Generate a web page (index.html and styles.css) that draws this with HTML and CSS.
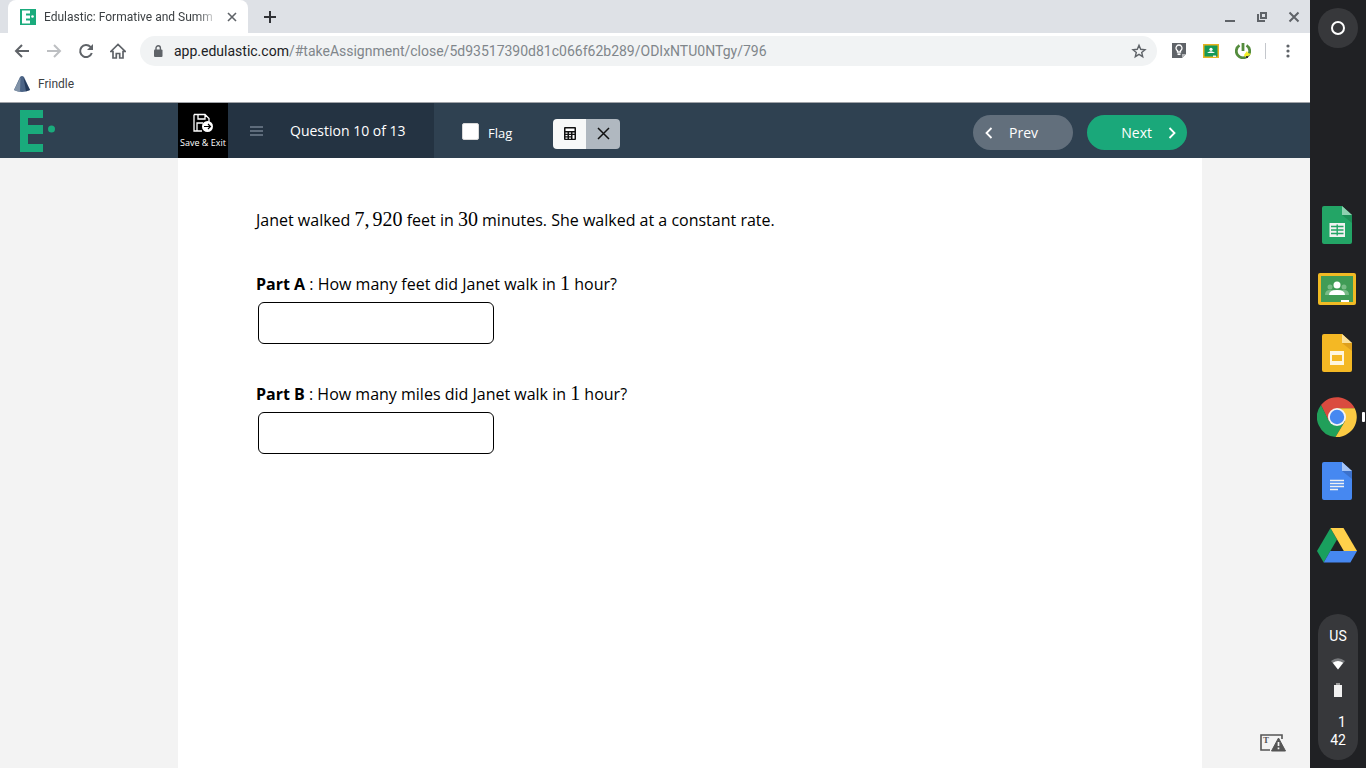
FILE: index.html
```html
<!DOCTYPE html>
<html lang="en">
<head>
<meta charset="utf-8">
<title>Edulastic: Formative and Summative Assessments</title>
<link rel="stylesheet" href="styles.css">
</head>
<body>
<div class="desktop">
  <div class="window">
    <div class="tabstrip">
      <div class="tab">
        <svg width="16" height="16" viewBox="0 0 16 16"><path fill="#1aab7c" d="M0 0h16v16H0z"/><path fill="#fff" d="M2 1.500h8v3H6v2h4v3H6v2h4v3H2z"/><circle cx="12.500" cy="7.500" r="1.300" fill="#fff"/></svg>
        <span class="tab-title">Edulastic: Formative and Summ</span>
        <button class="icon-btn" aria-label="Close tab"><svg width="10" height="10" viewBox="0 0 10 10"><path d="M1 1l8 8M9 1L1 9" stroke="#5f6368" stroke-width="1.600"/></svg></button>
      </div>
      <button class="icon-btn new-tab" aria-label="New tab"><svg width="12" height="12" viewBox="0 0 12 12"><path d="M6 0v12M0 6h12" stroke="#303236" stroke-width="2"/></svg></button>
      <div class="window-controls">
        <button class="icon-btn" aria-label="Minimize"><svg width="12" height="12" viewBox="0 0 12 12"><path d="M1 10h10" stroke="#5f6368" stroke-width="2"/></svg></button>
        <button class="icon-btn" aria-label="Restore"><svg width="12" height="12" viewBox="0 0 12 12" fill="none" stroke="#5f6368" stroke-width="2"><path d="M5 2h5v5H5z"/><path d="M2 3v7h7"/></svg></button>
        <button class="icon-btn" aria-label="Close"><svg width="12" height="12" viewBox="0 0 12 12"><path d="M1.500 1.500l9 9M10.500 1.500l-9 9" stroke="#5f6368" stroke-width="2"/></svg></button>
      </div>
    </div>
    <div class="toolbar">
      <div class="nav">
        <button class="icon-btn" aria-label="Back"><svg width="16" height="16" viewBox="0 0 16 16" fill="none" stroke="#5f6368" stroke-width="2"><path d="M15 8H2.500M8 2L2 8l6 6"/></svg></button>
        <button class="icon-btn" aria-label="Forward"><svg width="16" height="16" viewBox="0 0 16 16" fill="none" stroke="#bdbfc2" stroke-width="2"><path d="M1 8h12.500M8 2l6 6-6 6"/></svg></button>
        <button class="icon-btn" aria-label="Reload"><svg width="16" height="16" viewBox="0 0 16 16"><path d="M13.800 10a6 6 0 1 1-1.300-6.100L14 5.500" fill="none" stroke="#5f6368" stroke-width="2"/><path fill="#5f6368" d="M15 1v6H9z"/></svg></button>
        <button class="icon-btn" aria-label="Home"><svg width="16" height="16" viewBox="0 0 16 16"><path d="M.8 8.500L8 1.500l7.200 7H13V15H9.700v-4.500H6.300V15H3V8.500z" fill="none" stroke="#5f6368" stroke-width="1.700"/></svg></button>
      </div>
      <div class="address">
        <svg width="10" height="13" viewBox="0 0 10 13"><rect x="1" y="4.500" width="8.500" height="7.500" rx="1" fill="#5f6368"/><path d="M3 5V3a2.200 2.200 0 0 1 4.400 0v2" fill="none" stroke="#5f6368" stroke-width="1.400"/></svg>
        <span class="url"><span class="host">app.edulastic.com</span>/#takeAssignment/close/5d93517390d81c066f62b289/ODIxNTU0NTgy/796</span>
        <button class="icon-btn" aria-label="Bookmark"><svg width="16" height="16" viewBox="0 0 16 16"><path d="M8 2.300l1.700 4 4.300.4-3.300 2.800 1 4.200L8 11.400l-3.700 2.300 1-4.200L2 6.700l4.300-.4z" fill="none" stroke="#5f6368" stroke-width="1.400"/></svg></button>
      </div>
      <div class="extensions">
        <button class="icon-btn" aria-label="Keep"><svg width="16" height="16" viewBox="0 0 16 16"><path d="M1 0h14v11l-4 4H1z" fill="#5f6368"/><path d="M11 15v-4h4z" fill="#b5b7ba"/><path d="M6.500 9V7.600a3 3 0 1 1 3 0V9z" fill="none" stroke="#fff" stroke-width="1.300"/><path d="M6.500 11.200h3" stroke="#fff" stroke-width="1.700"/></svg></button>
        <button class="icon-btn" aria-label="Classroom"><svg width="16" height="16" viewBox="0 0 16 16"><path d="M0 1h16v14H0z" fill="#e8b321"/><path d="M1.500 2.500h13v11h-13z" fill="#159957"/><circle cx="8" cy="6.300" r="1.600" fill="#fff"/><path d="M4 10q4-3.500 8 0z" fill="#fff"/><path d="M10 12.500h3v1.500h-3z" fill="#eee"/></svg></button>
        <button class="icon-btn" aria-label="Power"><svg width="16" height="16" viewBox="0 0 16 16"><path d="M4.500 2.400a6.700 6.700 0 1 0 7 0M8 0v8" fill="none" stroke="#548c3d" stroke-width="2.800"/><path d="M9 12l3-4 1 2 3 1-3 2-3 1z" fill="#f4ef22"/><path d="M11 13h2v2h-2z" fill="#333"/></svg></button>
        <span class="separator"></span>
        <button class="icon-btn" aria-label="Menu"><svg width="16" height="16" viewBox="0 0 16 16" fill="#5f6368"><circle cx="8" cy="3" r="1.600"/><circle cx="8" cy="8" r="1.600"/><circle cx="8" cy="13" r="1.600"/></svg></button>
      </div>
    </div>
    <div class="bookmarks">
      <a class="bookmark" href="#frindle"><svg width="16" height="16" viewBox="0 0 16 16"><path d="M6 1Q8-1 10 1l6 13q-8 4-16 0z" fill="#4c6486"/><path d="M6.500 1.500L0 14q3 1.500 6 1.500z" fill="#8193a8"/><path d="M9.500 1.500L16 14l-4 1.300z" fill="#263b5b"/></svg>Frindle</a>
    </div>
    <header class="app-header">
      <div class="brand">
        <svg width="36" height="42" viewBox="0 0 36 42" role="img" aria-label="Edulastic"><path fill="#1aab7c" d="M0 0h23v8H8v7h15v9H8v10h15v8H0z"/><circle cx="31.500" cy="19" r="3.500" fill="#1aab7c"/></svg>
      </div>
      <button class="save">
        <svg width="22" height="20" viewBox="0 0 22 20"><path d="M2 1.500h11l4 4V10M10 18H2V1.500M6 1.500V6h7V1.500M5 18v-8h6" fill="none" stroke="#fff" stroke-width="1.300"/><circle cx="15.500" cy="13.500" r="5.500" fill="#fff"/><path d="M12 13.500h6M16 11l2.500 2.500L16 16" fill="none" stroke="#000" stroke-width="1.200"/></svg>
        <span>Save &amp; Exit</span>
      </button>
      <div class="question">
        <button class="icon-btn" aria-label="Question list"><svg width="13" height="10" viewBox="0 0 13 10"><path d="M0 1h13M0 5h13M0 9h13" stroke="#72808e" stroke-width="1.500"/></svg></button>
        <span>Question 10 of 13</span>
      </div>
      <label class="flag"><input type="checkbox">Flag</label>
      <div class="tools">
        <button class="tool" aria-label="Calculator"><svg width="12" height="13" viewBox="0 0 12 13"><path fill="#111" d="M1 0h10a1 1 0 0 1 1 1v11a1 1 0 0 1-1 1H1a1 1 0 0 1-1-1V1a1 1 0 0 1 1-1z"/><path fill="#fff" d="M1.500 1.500h9V4h-9zM1.500 5.500h2v1.300h-2zM5 5.500h2v1.300H5zM8.500 5.500h2v1.300h-2zM1.500 8h2v1.300h-2zM5 8h2v1.300H5zM1.500 10.500h2v1.300h-2zM5 10.500h2v1.300H5zM8.500 8h2v3.800h-2z"/></svg></button>
        <button class="tool tool-close" aria-label="Cross out"><svg width="13" height="13" viewBox="0 0 13 13"><path d="M1 1l11 11M12 1L1 12" stroke="#111" stroke-width="1.500"/></svg></button>
      </div>
      <div class="pager">
        <button class="page-btn prev"><svg width="8" height="12" viewBox="0 0 8 12"><path d="M6.500 1L1.500 6l5 5" fill="none" stroke="#fff" stroke-width="1.800"/></svg><span>Prev</span></button>
        <button class="page-btn next"><span>Next</span><svg width="8" height="12" viewBox="0 0 8 12"><path d="M1.500 1l5 5-5 5" fill="none" stroke="#fff" stroke-width="1.800"/></svg></button>
      </div>
    </header>
    <div class="stage">
      <main class="sheet">
        <p class="prompt">Janet walked <span class="math">7,<span class="digits">920</span></span> feet in <span class="math">30</span> minutes. She walked at a constant rate.</p>
        <div class="part">
          <label for="part-a"><b>Part A</b> : How many feet did Janet walk in <span class="math">1</span> hour?</label>
          <input id="part-a" class="answer" type="text">
        </div>
        <div class="part">
          <label for="part-b"><b>Part B</b> : How many miles did Janet walk in <span class="math">1</span> hour?</label>
          <input id="part-b" class="answer" type="text">
        </div>
      </main>
      <aside class="margin">
        <button class="icon-btn" aria-label="Report a problem"><svg width="26" height="18" viewBox="0 0 26 18"><path d="M22 5V1H1v15h9" fill="none" stroke="#555" stroke-width="1.600"/><text x="3" y="9" class="glyph">T</text><path d="M18.500 4L25.500 17h-14z" fill="#555" stroke="#555" stroke-linejoin="round"/><path d="M18.500 8v4M18.500 13.500v1.800" stroke="#f3f3f3" stroke-width="1.700"/></svg></button>
      </aside>
    </div>
  </div>
  <nav class="shelf">
    <button class="launcher" aria-label="Launcher"><svg width="16" height="16" viewBox="0 0 16 16"><circle cx="8" cy="8" r="6" fill="none" stroke="#fff" stroke-width="2"/></svg></button>
    <div class="apps">
      <button class="icon-btn" aria-label="Sheets"><svg width="40" height="40" viewBox="0 0 40 40"><path fill="#23a566" d="M7 1h18l10 9v27a2 2 0 0 1-2 2H7a2 2 0 0 1-2-2V3a2 2 0 0 1 2-2z"/><path fill="#8ed1b1" d="M25 1l10 9H25z"/><path d="M25 10h10v8z" fill="#1c8f57"/><path fill="#f1f1f1" d="M12.500 18H28v14H12.500z"/><path d="M14 21.500h12.500M14 25h12.500M14 28.500h12.500M20.200 19.500v11" stroke="#23a566" stroke-width="1.400"/></svg></button>
      <button class="icon-btn" aria-label="Classroom"><svg width="40" height="40" viewBox="0 0 40 40"><rect x="1" y="4" width="38" height="32" rx="2" fill="#f0ba24"/><path fill="#409c56" d="M4 7h32v26H4z"/><g fill="#79bc87"><circle cx="13" cy="18" r="2.500"/><circle cx="27" cy="18" r="2.500"/><path d="M8 26q0-5 5-5h14q5 0 5 5z"/></g><circle cx="20" cy="16" r="3.500" fill="#fff"/><path d="M12 26q0-5 8-5t8 5z" fill="#fff"/><path d="M24 31h8v2h-8z" fill="#fff"/></svg></button>
      <button class="icon-btn" aria-label="Slides"><svg width="40" height="40" viewBox="0 0 40 40"><path fill="#f4b824" d="M7 1h18l10 9v27a2 2 0 0 1-2 2H7a2 2 0 0 1-2-2V3a2 2 0 0 1 2-2z"/><path fill="#fae09a" d="M25 1l10 9H25z"/><path d="M25 10h10v8z" fill="#dfa01d"/><path fill="#fff6df" d="M13 18h14v14H13z"/><path fill="#f4b824" d="M15 22h10v6H15z"/></svg></button>
      <button class="icon-btn current" aria-label="Chrome"><svg width="40" height="40" viewBox="0 0 40 40"><path fill="#da4b3f" d="M4 8a20 20 0 0 1 33.700 3.200H20L11.500 24z"/><path fill="#21a05a" d="M4 8l8.200 16.500L20 29l7.800-4.500L18.500 40A20 20 0 0 1 4 8z"/><path fill="#fbca43" d="M20 11.200h17.700A20 20 0 0 1 18.500 40l9.300-15.500z"/><circle cx="20" cy="20" r="9" fill="#f4f4f4"/><circle cx="20" cy="20" r="7.200" fill="#4688f1"/></svg></button>
      <button class="icon-btn" aria-label="Docs"><svg width="40" height="40" viewBox="0 0 40 40"><path fill="#4688f1" d="M7 1h18l10 9v27a2 2 0 0 1-2 2H7a2 2 0 0 1-2-2V3a2 2 0 0 1 2-2z"/><path fill="#a6c5f7" d="M25 1l10 9H25z"/><path d="M25 10h10v8z" fill="#3d72cb"/><path d="M13 19.500h14M13 22.500h14M13 25.500h14M13 28.500h8" stroke="#f1f1f1" stroke-width="1.600"/></svg></button>
      <button class="icon-btn" aria-label="Drive"><svg width="40" height="40" viewBox="0 0 40 40"><path fill="#19a05e" d="M13.500 3L20 14.500 6.700 37.500 0 26z"/><path fill="#ffd04b" d="M13.500 3h13L40 26H26.800z"/><path fill="#4688f1" d="M13.300 26H40l-6.600 11.500H6.700z"/></svg></button>
    </div>
    <div class="status">
      <span>US</span>
      <svg width="16" height="14" viewBox="0 0 16 14"><path d="M1 4q7-5.500 14 0l-7 8.500z" fill="#77797c"/><path d="M2.800 5.800q5.200-3.500 10.400 0L8 12.500z" fill="#fff"/></svg>
      <svg width="10" height="14" viewBox="0 0 10 14"><path d="M3 0h4v2H3z" fill="#999"/><path d="M1 2h8v12H1z" fill="#f1f1f1"/></svg>
      <div class="clock"><span>1</span><span>42</span></div>
    </div>
  </nav>
</div>
</body>
</html>
```
FILE: styles.css
```css
* { box-sizing: border-box; }
body { margin: 0; font-family: "Open Sans", "Noto Sans", sans-serif; }
button { border: 0; padding: 0; background: none; color: inherit; font: inherit; cursor: pointer; }
svg { display: block; flex: none; }
.icon-btn { display: flex; align-items: center; justify-content: center; flex: none; }

.desktop { display: flex; min-height: 100vh; background: #202124; }
.window { flex: 1; min-width: 0; display: flex; flex-direction: column; background: #fff; }

.tabstrip { display: flex; height: 33px; padding-left: 8px; background: #dee1e6; font-family: Roboto, sans-serif; }
.tab { display: flex; align-items: center; width: 240px; padding: 0 11px 0 12px; background: #fff; border-radius: 8px 8px 0 0; }
.tab-title { flex: 1; margin: 0 9px 0 8px; white-space: nowrap; font-size: 12px; color: #3c4043; -webkit-mask-image: linear-gradient(to right, #000 88%, transparent); mask-image: linear-gradient(to right, #000 88%, transparent); }
.new-tab { margin-left: 16px; }
.window-controls { display: flex; align-items: center; gap: 20px; margin-left: auto; padding-right: 10px; }

.toolbar { display: flex; align-items: center; height: 36px; padding: 0 14px; font-family: Roboto, sans-serif; }
.nav { display: flex; gap: 16px; }
.address { flex: 1; display: flex; align-items: center; height: 30px; margin-left: 14px; padding: 0 10px 0 13px; border-radius: 15px; background: #f1f3f4; }
.url { flex: 1; margin-left: 11px; font-size: 14px; color: #80868b; white-space: nowrap; }
.host { color: #202124; }
.extensions { display: flex; align-items: center; gap: 16px; margin-left: 14px; }
.separator { width: 1px; height: 16px; margin: 0 -2px; background: #c4c7cc; }

.bookmarks { display: flex; align-items: center; height: 34px; padding: 0 14px 4px; border-bottom: 1px solid #a0a3a8; font-family: Roboto, sans-serif; }
.bookmark { display: flex; align-items: center; gap: 8px; font-size: 12px; color: #3c4043; text-decoration: none; }

.app-header { display: flex; align-items: stretch; height: 55px; background: #2f4151; color: #fff; }
.brand { display: flex; align-items: center; width: 178px; padding-left: 20px; }
.save { display: flex; flex-direction: column; align-items: center; justify-content: center; gap: 4px; width: 50px; background: #000; font-size: 9px; line-height: 12px; white-space: nowrap; }
.question { display: flex; align-items: center; gap: 27px; width: 206px; padding-left: 22px; background: #243342; font-size: 14px; }
.flag { display: flex; align-items: center; gap: 9px; margin-left: 28px; padding-top: 5px; font-size: 13px; }
.flag input { appearance: none; width: 17px; height: 17px; margin: 0 0 3px; background: #fff; border: 1px solid #d9d9d9; border-radius: 2px; }
.tools { display: flex; align-self: center; height: 30px; margin: 6px 0 0 41px; border-radius: 4px; overflow: hidden; }
.tool { display: flex; align-items: center; justify-content: center; width: 33px; background: #f7f8f8; }
.tool-close { width: 34px; background: #b0b8c0; }
.pager { display: flex; align-items: center; gap: 14px; margin-left: auto; padding: 4px 123px 0 0; }
.page-btn { display: flex; align-items: center; width: 100px; height: 35px; border-radius: 18px; font-size: 14px; }
.prev { gap: 16px; padding-left: 12px; background: #626f7c; }
.next { justify-content: flex-end; gap: 16px; padding-right: 11px; background: #1aa87a; }

.stage { flex: 1; display: flex; padding-left: 178px; background: #f3f3f3; }
.sheet { flex: 1; padding: 50px 78px; background: #fff; color: #000; font-size: 16px; line-height: 24px; }
.prompt { margin: 0 0 40px; }
.math { font-family: "Liberation Serif", serif; font-size: 20px; line-height: 20px; }
.digits { margin-left: 3px; }
.part { display: flex; flex-direction: column; margin-bottom: 44px; }
.answer { width: 236px; height: 42px; margin: 6px 0 0 2px; padding: 0 12px; border: 1px solid #000; border-radius: 6px; font: inherit; }
.part + .part { margin-top: -6px; }
.margin { display: flex; align-items: flex-end; justify-content: flex-end; width: 108px; padding: 0 24px 16px 0; }
.glyph { font: bold 9px "Liberation Serif", serif; fill: #555; }

.shelf { display: flex; flex-direction: column; align-items: center; justify-content: space-between; width: 56px; padding: 8px 0; color: #fff; font-family: Roboto, sans-serif; }
.launcher { display: flex; align-items: center; justify-content: center; width: 40px; height: 40px; border-radius: 20px; background: #37383b; }
.apps { display: flex; flex-direction: column; gap: 24px; padding: 108px 2px 0 0; }
.current { position: relative; }
.current::after { content: ""; position: absolute; right: -8px; top: 15px; width: 3px; height: 10px; border-radius: 1px; background: #fff; }
.status { display: flex; flex-direction: column; align-items: center; gap: 12px; width: 40px; padding: 13px 0 11px; border-radius: 20px; background: #37383b; font-size: 14px; line-height: 18px; }
.clock { display: flex; flex-direction: column; align-items: flex-end; padding-top: 4px; }
```
